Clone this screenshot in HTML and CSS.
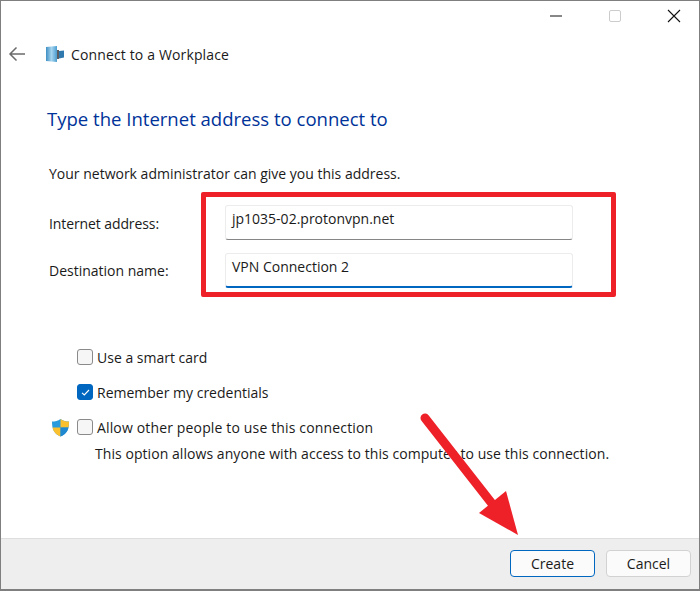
FILE: index.html
```html
<!DOCTYPE html>
<html lang="en">
<head>
<meta charset="utf-8">
<title>Connect to a Workplace</title>
<link rel="stylesheet" href="styles.css">
</head>
<body>
<div class="window">
  <div class="titlebar">
    <svg class="win-icon" width="16" height="16" viewBox="0 0 16 16"><path d="M2 8h12" stroke="#111" stroke-width="1"/></svg>
    <svg class="win-icon" width="16" height="16" viewBox="0 0 16 16"><rect x="2.500" y="2.500" width="11" height="11" rx="1.500" fill="none" stroke="#ccc"/></svg>
    <svg class="win-icon" width="16" height="16" viewBox="0 0 16 16"><path d="M2 2l12 12M14 2L2 14" stroke="#111" stroke-width="1.100"/></svg>
  </div>
  <div class="nav">
    <svg class="back" width="18" height="16" viewBox="0 0 18 16"><path d="M17 8H2M8.500 1.500 2 8l6.500 6.500" fill="none" stroke="#6b6b6b" stroke-width="1.500"/></svg>
    <svg class="vpn" width="20" height="18" viewBox="0 0 20 18">
      <defs><linearGradient id="srv" x1="0" x2="1" y1="0" y2="0"><stop offset="0" stop-color="#3f8fc4"/><stop offset=".5" stop-color="#a5d4ee"/><stop offset="1" stop-color="#4a9ccf"/></linearGradient></defs>
      <path d="M1 2 12 1v16L1 16z" fill="url(#srv)"/>
      <path d="M12 5h2v9h-2z" fill="#5b5f63"/>
      <path d="M14 6l5-.5v7l-5 1z" fill="#2f79ae"/>
    </svg>
    <span class="nav-title">Connect to a Workplace</span>
  </div>
  <main class="content">
    <h1 class="heading">Type the Internet address to connect to</h1>
    <p class="intro">Your network administrator can give you this address.</p>
    <div class="field-grid">
      <label class="field-label upper" for="addr">Internet address:</label>
      <div class="input" id="addr">jp1035-02.protonvpn.net</div>
      <label class="field-label" for="dest">Destination name:</label>
      <div class="input focused" id="dest">VPN Connection 2</div>
    </div>
    <div class="options">
      <div class="option"><span class="check"></span><span>Use a smart card</span></div>
      <div class="option"><span class="check on"><svg width="11" height="11" viewBox="0 0 11 11"><path d="M2 5.800 4.300 8 9 3" fill="none" stroke="#fff" stroke-width="1.100"/></svg></span><span>Remember my credentials</span></div>
      <div class="option shielded">
        <svg class="shield" width="19" height="19" viewBox="0 0 19 19">
          <path d="M9.500 1C7 3 4 3.500 1 3.500c0 7 1.500 12 8.500 15 7-3 8.500-8 8.500-15C15 3.500 12 3 9.500 1z" fill="#2a9bdc"/>
          <path d="M9.500 1C12 3 15 3.500 18 3.500c0 2.300-.1 4.300-.5 6H9.500z" fill="#fbc02d"/>
          <path d="M1.500 9.500h8v9c-5-2.100-7.200-5.300-8-9z" fill="#fbc02d"/>
          <path d="M9.500 9.500h8c-.8 3.700-3 6.900-8 9z" fill="#1e88d0"/>
        </svg>
        <span class="check"></span><span class="wide">Allow other people to use this connection</span>
      </div>
      <p class="note">This option allows anyone with access to this computer to use this connection.</p>
    </div>
  </main>
  <footer class="footer">
    <button class="btn primary" type="button">Create</button>
    <button class="btn" type="button">Cancel</button>
  </footer>
  <div class="callout"></div>
  <svg class="arrow" width="130" height="135" viewBox="0 0 130 135">
    <path d="M9 13 81 105" stroke="#ee2129" stroke-width="9" stroke-linecap="round" fill="none"/>
    <path d="M90 86 102 130 63 108z" fill="#ee2129"/>
  </svg>
</div>
</body>
</html>
```
FILE: styles.css
```css
* { box-sizing: border-box; }
html, body { margin: 0; padding: 0; }
body {
  width: 700px;
  height: 591px;
  overflow: hidden;
  font-family: "Open Sans", "Noto Sans", sans-serif;
  font-size: 14px;
  color: #1a1a1a;
  background: #fff;
}
.window {
  position: relative;
  width: 700px;
  height: 591px;
  background: #fff;
  border: 1px solid #7f7f7f;
  border-width: 1px 1px 2px 1px;
  display: flex;
  flex-direction: column;
}
.titlebar {
  display: flex;
  justify-content: flex-end;
  align-items: center;
  gap: 43px;
  height: 30px;
  padding-right: 17px;
}
.nav {
  display: flex;
  align-items: center;
  height: 30px;
  margin-top: 8px;
  padding-left: 7px;
}
.vpn { margin-left: 19px; }
.nav-title { margin-left: 6px; letter-spacing: .14px; }
.content { flex: 1; padding-left: 46px; }
.heading {
  margin: 37px 0 0;
  font-size: 18.550px;
  font-weight: 400;
  line-height: 26px;
  color: #003399;
}
.intro { margin: 32px 0 0 2px; line-height: 20px; }
.field-grid {
  display: grid;
  grid-template-columns: 176px 348px;
  row-gap: 13px;
  margin: 21px 0 0 2px;
  align-items: center;
}
.field-label { line-height: 20px; }
.field-label.upper { padding-top: 2px; letter-spacing: -.1px; }
.input {
  height: 35px;
  padding: 3px 6px;
  line-height: 20px;
  background: #fff;
  border: 1px solid #ececec;
  border-bottom: 1px solid #868686;
  border-radius: 3px;
}
.input.focused { border-bottom: 2px solid #0067c0; }
.options { margin: 60px 0 0 30px; }
.option {
  position: relative;
  display: flex;
  align-items: center;
  gap: 4px;
  height: 18px;
  margin-bottom: 17px;
}
.check {
  width: 16px;
  height: 16px;
  display: flex;
  align-items: center;
  justify-content: center;
  background: #f6f6f6;
  border: 1px solid #8a8a8a;
  border-radius: 3px;
}
.check.on { background: #0067c0; border-color: #0067c0; }
.wide { letter-spacing: .15px; }
.shield { position: absolute; left: -26px; top: 0; }
.note { margin: -9px 0 0 18px; line-height: 20px; letter-spacing: .06px; }
.footer {
  display: flex;
  justify-content: flex-end;
  gap: 11px;
  height: 51px;
  padding: 11px 8px 0 0;
  background: #eeeeee;
  border-top: 1px solid #dedede;
}
.btn {
  width: 85px;
  height: 27px;
  padding: 0;
  font: inherit;
  color: inherit;
  background: #fbfbfb;
  border: 1px solid #d2d2d2;
  border-radius: 4px;
}
.btn.primary { border-color: #0067c0; }
.callout {
  position: absolute;
  left: 200px;
  top: 191px;
  width: 415px;
  height: 105px;
  border: 5px solid #ee2129;
  border-radius: 2px;
}
.arrow { position: absolute; left: 415px; top: 404px; }
```
